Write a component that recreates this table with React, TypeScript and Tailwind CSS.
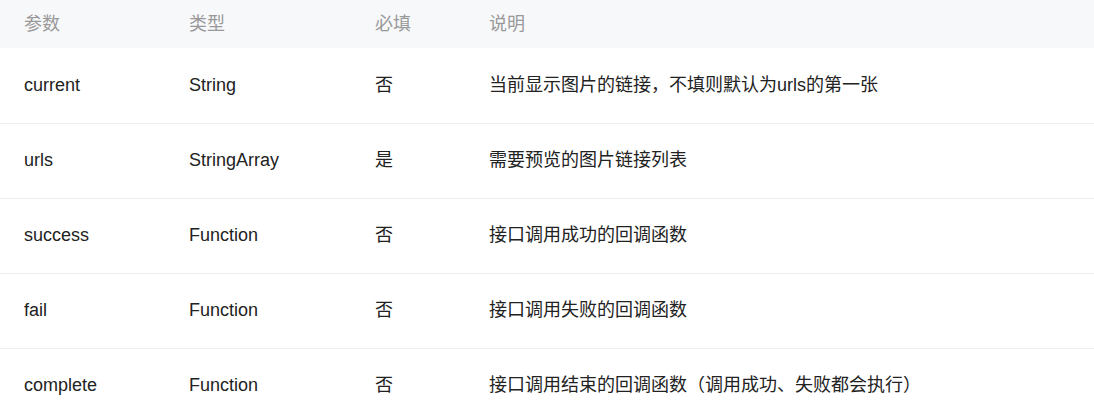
import React from "react";

interface Param {
  name: string;
  type: string;
  required: string;
  desc: string;
}

const params: Param[] = [
  { name: "current", type: "String", required: "否", desc: "当前显示图片的链接，不填则默认为urls的第一张" },
  { name: "urls", type: "StringArray", required: "是", desc: "需要预览的图片链接列表" },
  { name: "success", type: "Function", required: "否", desc: "接口调用成功的回调函数" },
  { name: "fail", type: "Function", required: "否", desc: "接口调用失败的回调函数" },
  { name: "complete", type: "Function", required: "否", desc: "接口调用结束的回调函数（调用成功、失败都会执行）" },
];

const App: React.FC = () => {
  return (
    <div
      className="w-[1094px] h-[419px] overflow-hidden bg-white text-[18px] text-[#222]"
      style={{ fontFamily: '"Liberation Sans", "Noto Sans CJK SC", sans-serif' }}
    >
      <table className="w-full border-collapse table-fixed">
        <thead>
          <tr className="h-[48px] bg-[#f7f8fa] text-[#999] text-left">
            <th className="w-[189px] pl-6 font-normal">参数</th>
            <th className="w-[186px] font-normal">类型</th>
            <th className="w-[114px] font-normal">必填</th>
            <th className="font-normal">说明</th>
          </tr>
        </thead>
        <tbody>
          {params.map((p) => (
            <tr key={p.name} className="h-[75px] border-b border-[#ebedf0]">
              <td className="pl-6">{p.name}</td>
              <td>{p.type}</td>
              <td>{p.required}</td>
              <td>{p.desc}</td>
            </tr>
          ))}
        </tbody>
      </table>
    </div>
  );
};

export default App;
